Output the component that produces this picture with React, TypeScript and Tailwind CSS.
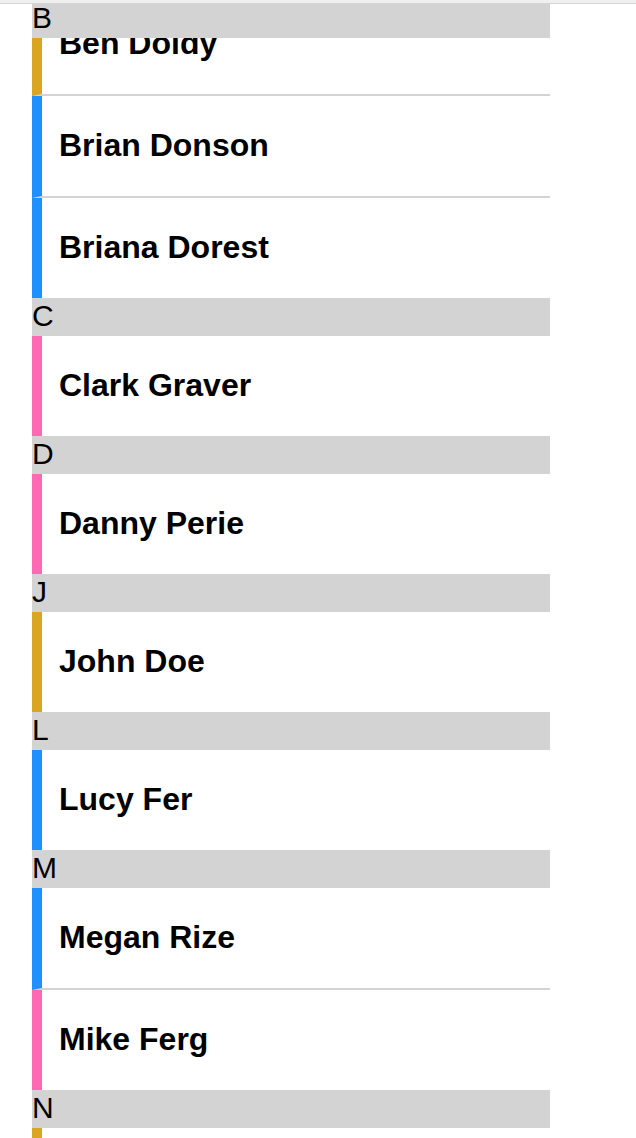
import React from "react";

type Person = { name: string; color: string };
type Section = { letter: string; people: Person[] };

const GOLD = "border-l-[#daa520]";
const BLUE = "border-l-[#1e90ff]";
const PINK = "border-l-[#ff69b4]";

const SECTIONS: Section[] = [
  { letter: "C", people: [{ name: "Clark Graver", color: PINK }] },
  { letter: "D", people: [{ name: "Danny Perie", color: PINK }] },
  { letter: "J", people: [{ name: "John Doe", color: GOLD }] },
  { letter: "L", people: [{ name: "Lucy Fer", color: BLUE }] },
  {
    letter: "M",
    people: [
      { name: "Megan Rize", color: BLUE },
      { name: "Mike Ferg", color: PINK },
    ],
  },
  // next row is just off screen, only its bar peeks in
  { letter: "N", people: [{ name: "", color: GOLD }] },
];

const B_PEOPLE: Person[] = [
  { name: "Ben Doldy", color: GOLD },
  { name: "Brian Donson", color: BLUE },
  { name: "Briana Dorest", color: BLUE },
];

function Header({ letter }: { letter: string }) {
  return (
    <div className="relative z-10 h-[38px] bg-[#d3d3d3] text-[30px] leading-[35px] text-black">
      {letter}
    </div>
  );
}

function Row({ person, last }: { person: Person; last: boolean }) {
  return (
    <div
      className={`flex items-center border-l-[10px] border-solid bg-white pb-[2px] pl-[17px] ${person.color} ${
        last ? "h-[100px]" : "h-[102px] border-b-2 border-b-[#d3d3d3]"
      }`}
    >
      <span className="text-[32px] font-bold leading-[35px] text-black">
        {person.name}
      </span>
    </div>
  );
}

export default function App() {
  return (
    <div
      className="relative h-[1138px] w-[636px] overflow-hidden bg-white"
      style={{ fontFamily: '"Liberation Sans", Arial, sans-serif' }}
    >
      {/* thin top strip */}
      <div className="absolute left-0 right-0 top-0 z-20 h-[4px] border-b border-b-[#d6d6d6] bg-[#efefef]" />

      <div className="ml-[32px] w-[518px]">
        {/* section B, scrolled under its sticky header */}
        <Header letter="B" />
        <div className="-mt-[44px]">
          {B_PEOPLE.map((p, i) => (
            <Row key={p.name} person={p} last={i === B_PEOPLE.length - 1} />
          ))}
        </div>

        {SECTIONS.map((s) => (
          <div key={s.letter}>
            <Header letter={s.letter} />
            {s.people.map((p, i) => (
              <Row key={s.letter + i} person={p} last={i === s.people.length - 1} />
            ))}
          </div>
        ))}
      </div>
    </div>
  );
}
